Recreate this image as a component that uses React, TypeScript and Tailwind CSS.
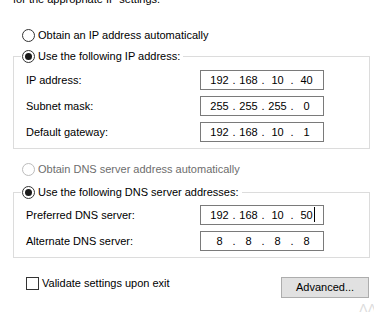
import React from 'react';

type RadioProps = { checked?: boolean; disabled?: boolean };

function Radio({ checked, disabled }: RadioProps) {
  return (
    <span
      className={`flex h-[13px] w-[13px] shrink-0 items-center justify-center rounded-full border bg-white ${
        disabled ? 'border-[#bcbcbc]' : 'border-[#333333]'
      }`}
    >
      {checked && <span className="h-[7px] w-[7px] rounded-full bg-[#1a1a1a]" />}
    </span>
  );
}

function IpBox({ octets, caret }: { octets: string[]; caret?: boolean }) {
  return (
    <div className="flex h-[20px] w-[124px] items-center border border-[#7a7a7a] bg-white pl-[7px]">
      {octets.map((o, i) => (
        <React.Fragment key={i}>
          <span className="w-[23px] text-center leading-[13px]">
            {caret && i === 3 ? (
              <span className="relative">
                {o}
                <span className="absolute -right-[2px] top-[-2px] h-[15px] w-px bg-black" />
              </span>
            ) : (
              o
            )}
          </span>
          {i < 3 && <span className="w-[6px] text-center leading-[13px]">.</span>}
        </React.Fragment>
      ))}
    </div>
  );
}

function Row({ label, octets, caret }: { label: string; octets: string[]; caret?: boolean }) {
  return (
    <div className="flex h-[20px] items-center pl-[12px]">
      <span className="w-[174px] leading-[13px]">{label}</span>
      <IpBox octets={octets} caret={caret} />
    </div>
  );
}

export default function App() {
  return (
    <div
      className="relative h-[312px] w-[374px] overflow-hidden bg-white text-[11px] text-black"
      style={{ fontFamily: '"Liberation Sans", Arial, sans-serif' }}
    >
      <div className="-mt-[7px] pl-[13px] leading-[13px]">for the appropriate IP settings.</div>

      {/* IP section */}
      <div className="mt-[23px] flex h-[13px] items-center gap-[3px] pl-[22px]">
        <Radio />
        <span className="leading-[13px]">Obtain an IP address automatically</span>
      </div>

      <fieldset className="mt-[8px] ml-[13px] w-[357px] border border-[#dcdcdc] px-0 pb-[6px]">
        <legend className="ml-[7px] pl-[1px] pr-[3px]">
          <span className="flex h-[13px] items-center gap-[3px]">
            <Radio checked />
            <span className="leading-[13px]">Use the following IP address:</span>
          </span>
        </legend>
        <div className="mt-[7px] flex flex-col gap-[6px]">
          <Row label="IP address:" octets={['192', '168', '10', '40']} />
          <Row label="Subnet mask:" octets={['255', '255', '255', '0']} />
          <Row label="Default gateway:" octets={['192', '168', '10', '1']} />
        </div>
      </fieldset>

      {/* DNS section */}
      <div className="mt-[14px] flex h-[13px] items-center gap-[3px] pl-[22px] text-[#6d6d6d]">
        <Radio disabled />
        <span className="leading-[13px]">Obtain DNS server address automatically</span>
      </div>

      <fieldset className="mt-[10px] ml-[13px] w-[357px] border border-[#dcdcdc] px-0 pb-[6px]">
        <legend className="ml-[7px] pl-[1px] pr-[3px]">
          <span className="flex h-[13px] items-center gap-[3px]">
            <Radio checked />
            <span className="leading-[13px]">Use the following DNS server addresses:</span>
          </span>
        </legend>
        <div className="mt-[6px] flex flex-col gap-[6px]">
          <Row label="Preferred DNS server:" octets={['192', '168', '10', '50']} caret />
          <Row label="Alternate DNS server:" octets={['8', '8', '8', '8']} />
        </div>
      </fieldset>

      {/* footer */}
      <div className="mt-[19px] flex items-start justify-between pl-[26px] pr-[5px]">
        <div className="flex h-[13px] items-center gap-[3px]">
          <span className="h-[13px] w-[13px] border border-[#333333] bg-white" />
          <span className="leading-[13px]">Validate settings upon exit</span>
        </div>
        <button className="h-[21px] w-[88px] border border-[#adadad] bg-[#e1e1e1] leading-[13px] text-black">
          Advanced...
        </button>
      </div>

      <span className="absolute left-[359px] top-[301px] text-[13px] leading-[16px] text-[#dcdcdc]">ΛΛ</span>
    </div>
  );
}
